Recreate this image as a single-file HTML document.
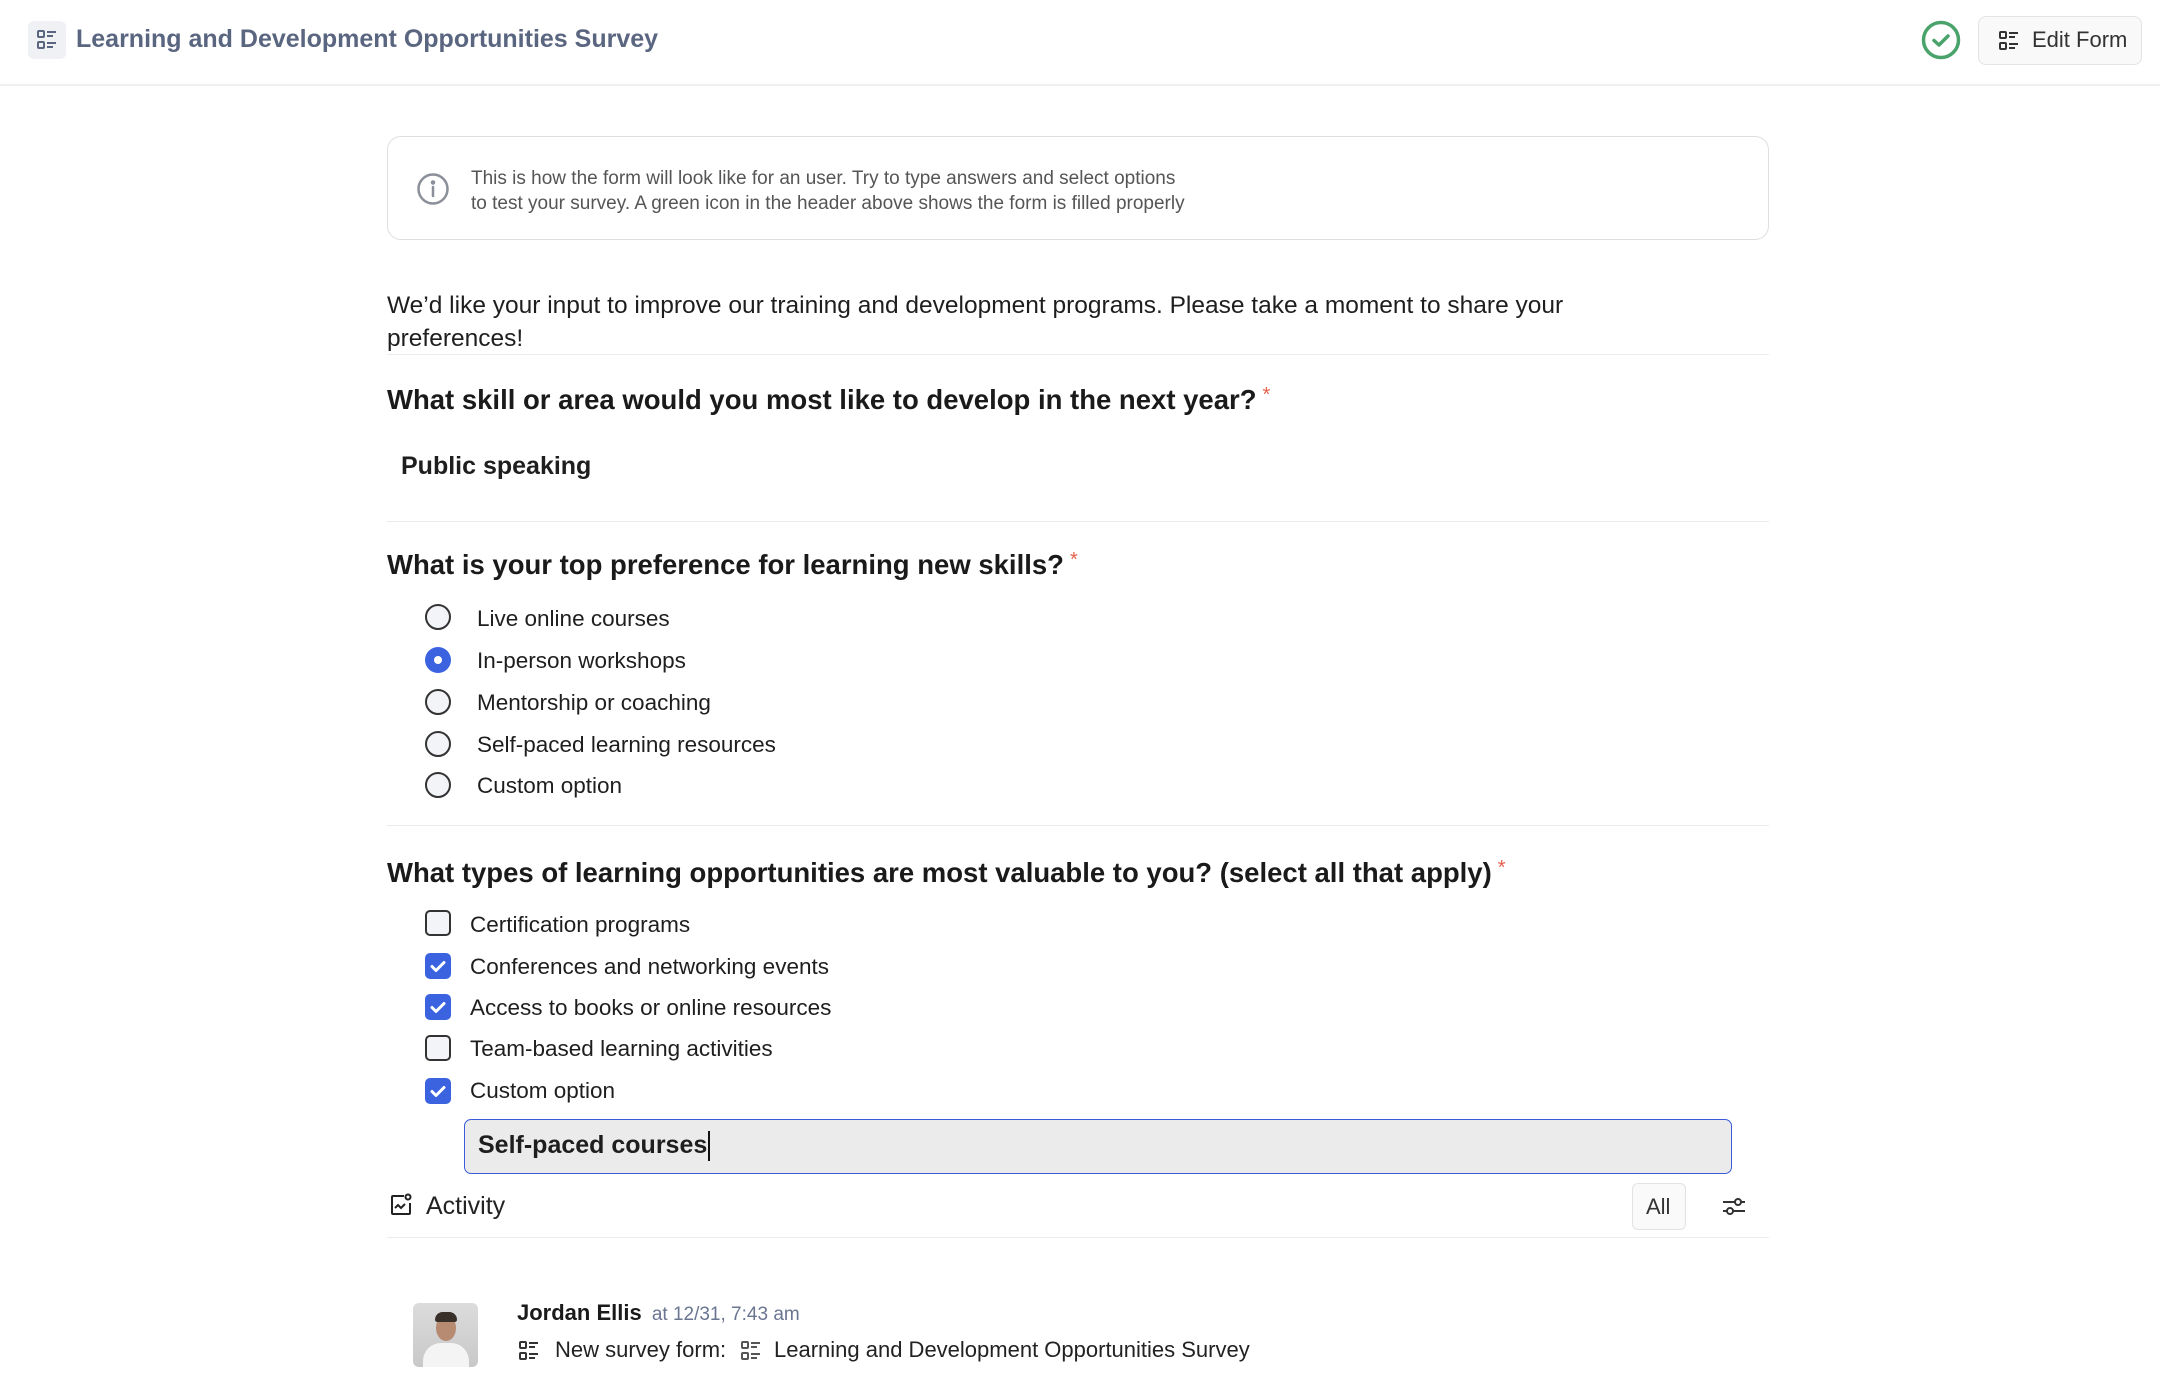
<!DOCTYPE html>
<html><head><meta charset="utf-8"><style>
*{box-sizing:border-box;margin:0;padding:0}
body{width:2160px;height:1396px;background:#fff;font-family:"Liberation Sans",sans-serif;color:#1a1a1a;position:relative;overflow:hidden}
.a{position:absolute;white-space:nowrap}
.hdr{position:absolute;left:0;top:0;width:2160px;height:86px;border-bottom:2px solid #f0f0f2}
.hl{position:absolute;left:387px;width:1382px;height:1px;background:#ececec}
.radio{position:absolute;left:425px;width:26px;height:26px;border:2px solid #333;border-radius:50%;background:#f3f4f8}
.radio.on{border:none;background:#3b63e0}
.radio.on::after{content:"";position:absolute;left:9px;top:9px;width:8px;height:8px;border-radius:50%;background:#fff}
.cb{position:absolute;left:425px;width:26px;height:26px;border:2px solid #333;border-radius:5px;background:#f3f4f8}
.cb.on{border:none;background:#3b63e0}
.lbl{position:absolute;font-size:22.5px;color:#1e1e1e;white-space:nowrap;line-height:26px}
.q{position:absolute;left:387px;font-size:27.5px;font-weight:bold;white-space:nowrap}
.q span{color:#e8604c;font-weight:normal;font-size:20px;vertical-align:top;margin-left:6px}
</style></head><body>
<div class="hdr"></div>
<div class="a" style="left:28px;top:21px;width:38px;height:38px;border-radius:6px;background:#f0f1f5"></div>
<svg class="a" style="left:36px;top:29px" width="22" height="22" viewBox="0 0 22 22" fill="none" stroke="#5a6580" stroke-width="2"><rect x="2" y="2" width="6" height="6" rx="1"/><rect x="2" y="13" width="6" height="6" rx="1"/><path d="M11 3h9M11 7h6M11 14h9M11 18h6"/></svg>
<div class="a" style="left:76px;top:25px;font-size:25px;font-weight:bold;color:#5a6580">Learning and Development Opportunities Survey</div>
<svg class="a" style="left:1921px;top:20px" width="40" height="40" viewBox="0 0 40 40" fill="none" stroke="#4aa36a" stroke-width="3.5"><circle cx="20" cy="20" r="17.5"/><path d="M13 20.5l5 4.5 9-9" stroke-linecap="round" stroke-linejoin="round"/></svg>
<div class="a" style="left:1978px;top:16px;width:164px;height:49px;border:1px solid #e4e4e4;border-radius:8px;background:#f9f9f9"></div>
<svg class="a" style="left:1998px;top:30px" width="22" height="22" viewBox="0 0 22 22" fill="none" stroke="#333" stroke-width="2"><rect x="2" y="2" width="6" height="6" rx="1"/><rect x="2" y="13" width="6" height="6" rx="1"/><path d="M11 3h9M11 7h6M11 14h9M11 18h6"/></svg>
<div class="a" style="left:2032px;top:27px;font-size:22px;color:#333">Edit Form</div>

<div class="a" style="left:387px;top:136px;width:1382px;height:104px;border:1px solid #dedede;border-radius:14px"></div>
<svg class="a" style="left:416px;top:172px" width="34" height="34" viewBox="0 0 34 34" fill="none" stroke="#8a8f99" stroke-width="2.5"><circle cx="17" cy="17" r="14.5"/><path d="M17 15v9" stroke-linecap="round"/><circle cx="17" cy="10.5" r="1" fill="#8a8f99"/></svg>
<div class="a" style="left:471px;top:166px;font-size:19px;line-height:25px;color:#555">This is how the form will look like for an user. Try to type answers and select options<br>to test your survey. A green icon in the header above shows the form is filled properly</div>

<div style="position:absolute;left:387px;top:289px;font-size:24.5px;line-height:33px;color:#1e1e1e;white-space:normal;width:1300px">We’d like your input to improve our training and development programs. Please take a moment to share your preferences!</div>
<div class="hl" style="top:354px"></div>
<div class="q" style="top:384px">What skill or area would you most like to develop in the next year?<span>*</span></div>
<div class="a" style="left:401px;top:452px;font-size:25px;font-weight:bold;color:#1e1e1e">Public speaking</div>
<div class="hl" style="top:521px"></div>
<div class="q" style="top:549px">What is your top preference for learning new skills?<span>*</span></div>
<div class="radio" style="top:604px"></div><div class="lbl" style="left:477px;top:606px">Live online courses</div>
<div class="radio on" style="top:647px"></div><div class="lbl" style="left:477px;top:648px">In-person workshops</div>
<div class="radio" style="top:689px"></div><div class="lbl" style="left:477px;top:690px">Mentorship or coaching</div>
<div class="radio" style="top:731px"></div><div class="lbl" style="left:477px;top:732px">Self-paced learning resources</div>
<div class="radio" style="top:772px"></div><div class="lbl" style="left:477px;top:773px">Custom option</div>
<div class="hl" style="top:825px"></div>
<div class="q" style="top:857px">What types of learning opportunities are most valuable to you? (select all that apply)<span>*</span></div>
<svg width="0" height="0" style="position:absolute"><defs><symbol id="ck" viewBox="0 0 26 26"><path d="M7 13.5l4 4 8-8" fill="none" stroke="#fff" stroke-width="3" stroke-linecap="round" stroke-linejoin="round"/></symbol></defs></svg>
<div class="cb" style="top:910px"></div><div class="lbl" style="left:470px;top:912px">Certification programs</div>
<div class="cb on" style="top:953px"><svg width="26" height="26"><use href="#ck"/></svg></div><div class="lbl" style="left:470px;top:954px">Conferences and networking events</div>
<div class="cb on" style="top:994px"><svg width="26" height="26"><use href="#ck"/></svg></div><div class="lbl" style="left:470px;top:995px">Access to books or online resources</div>
<div class="cb" style="top:1035px"></div><div class="lbl" style="left:470px;top:1036px">Team-based learning activities</div>
<div class="cb on" style="top:1078px"><svg width="26" height="26"><use href="#ck"/></svg></div><div class="lbl" style="left:470px;top:1078px">Custom option</div>
<div class="a" style="left:464px;top:1119px;width:1268px;height:55px;background:#ebebeb;border:1.5px solid #3b5bdb;border-radius:7px"></div>
<div class="a" style="left:478px;top:1131px;font-size:25px;font-weight:bold;color:#1e1e1e">Self-paced courses<span style="display:inline-block;width:2px;height:30px;background:#111;vertical-align:middle;margin-left:1px"></span></div>

<svg class="a" style="left:389px;top:1193px" width="24" height="24" viewBox="0 0 24 24" fill="none" stroke="#222" stroke-width="2"><path d="M15 3H4a1 1 0 0 0-1 1v16a1 1 0 0 0 1 1h16a1 1 0 0 0 1-1V10"/><circle cx="19" cy="4" r="2.5"/><path d="M6 15l3-3 3 3 4-4"/></svg>
<div class="a" style="left:426px;top:1192px;font-size:25px;color:#222">Activity</div>
<div class="a" style="left:1632px;top:1183px;width:54px;height:47px;border:1px solid #e2e2e2;border-radius:6px;background:#fafafa"></div>
<div class="a" style="left:1646px;top:1194px;font-size:22px;color:#333">All</div>
<svg class="a" style="left:1721px;top:1193px" width="26" height="26" viewBox="0 0 26 26" fill="none" stroke="#333" stroke-width="2"><path d="M2 9h12M20 9h4M2 18h4M12 18h12"/><circle cx="17" cy="9" r="3"/><circle cx="9" cy="18" r="3"/></svg>
<div class="hl" style="top:1237px"></div>

<div class="a" style="left:413px;top:1303px;width:65px;height:64px;border-radius:6px;background:linear-gradient(#dcdcdc,#c8c8c8);overflow:hidden">
<div style="position:absolute;left:23px;top:12px;width:20px;height:26px;border-radius:50%;background:#b78a72"></div>
<div style="position:absolute;left:22px;top:9px;width:22px;height:10px;border-radius:10px 10px 3px 3px;background:#3a302a"></div>
<div style="position:absolute;left:10px;top:40px;width:46px;height:30px;border-radius:18px 18px 0 0;background:#f4f4f4"></div></div>
<div class="a" style="left:517px;top:1300px;font-size:22px;font-weight:bold;color:#1a1a1a">Jordan Ellis <span style="font-weight:normal;font-size:19px;color:#6a7590;margin-left:4px">at 12/31, 7:43 am</span></div>
<svg class="a" style="left:518px;top:1340px" width="22" height="22" viewBox="0 0 22 22" fill="none" stroke="#333" stroke-width="2"><rect x="2" y="2" width="6" height="6" rx="1"/><rect x="2" y="13" width="6" height="6" rx="1"/><path d="M11 3h9M11 7h6M11 14h9M11 18h6"/></svg>
<div class="a" style="left:555px;top:1337px;font-size:22px;color:#222">New survey form:</div>
<svg class="a" style="left:740px;top:1340px" width="22" height="22" viewBox="0 0 22 22" fill="none" stroke="#555" stroke-width="2"><rect x="2" y="2" width="6" height="6" rx="1"/><rect x="2" y="13" width="6" height="6" rx="1"/><path d="M11 3h9M11 7h6M11 14h9M11 18h6"/></svg>
<div class="a" style="left:774px;top:1337px;font-size:22px;color:#222">Learning and Development Opportunities Survey</div>
</body></html>
